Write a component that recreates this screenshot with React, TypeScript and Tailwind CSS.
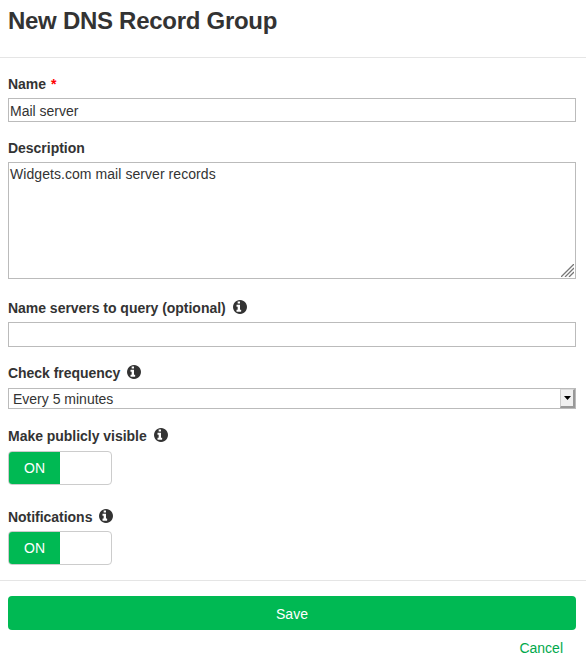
import { ReactNode, useState } from "react";

function InfoIcon() {
    return (
        <svg className="ml-[7px] h-[14px] w-[14px] shrink-0 -translate-y-px" viewBox="128 128 1536 1536" fill="currentColor" aria-hidden="true">
            <path d="M1024 1376v-160q0-14-9-23t-23-9h-96v-512q0-14-9-23t-23-9h-320q-14 0-23 9t-9 23v160q0 14 9 23t23 9h96v320h-96q-14 0-23 9t-9 23v160q0 14 9 23t23 9h448q14 0 23-9t9-23zM896 480v-160q0-14-9-23t-23-9h-192q-14 0-23 9t-9 23v160q0 14 9 23t23 9h192q14 0 23-9t9-23zM1664 896q0 209-103 385.5t-279.5 279.5-385.5 103-385.5-103-279.5-279.5-103-385.5 103-385.5 279.5-279.5 385.5-103 385.5 103 279.5 279.5 103 385.5z" />
        </svg>
    );
}

function Label({ text, children }: { text: string; children?: ReactNode }) {
    return (
        <div className="flex h-5 items-center font-bold leading-5 tracking-[-0.03px] whitespace-nowrap">
            <span>{text}</span>
            {children}
        </div>
    );
}

function Toggle() {
    const [on, setOn] = useState(true);

    return (
        <button
            type="button"
            onClick={() => setOn(!on)}
            className="flex h-[34px] w-[104px] overflow-hidden rounded-[4px] border border-[#ccc] bg-white"
        >
            <span className={on ? "flex h-full w-[51px] items-center justify-center bg-[#00b953] pt-px text-white" : "h-full w-[51px]"}>
                {on && "ON"}
            </span>
        </button>
    );
}

export default function App() {
    const [name, setName] = useState("Mail server");
    const [description, setDescription] = useState("Widgets.com mail server records");
    const [servers, setServers] = useState("");

    return (
        <form className="h-[664px] bg-white font-['Liberation_Sans',Arial,sans-serif] text-[14px] text-[#333]">
            <header className="h-[58px] border-b border-[#e5e5e5] pl-2">
                <h1 className="pt-1 text-[24px] font-bold leading-[34px] tracking-[-0.28px] whitespace-nowrap">New DNS Record Group</h1>
            </header>

            <section className="h-[523px] border-b border-[#e5e5e5] pt-4 pr-[10px] pl-2">
                <Label text="Name">
                    <span className="ml-[5px] text-[#f00]">*</span>
                </Label>
                <input
                    className="mt-1 block h-6 w-full border border-[#bbb] px-px pt-px outline-none"
                    value={name}
                    onChange={(e) => setName(e.target.value)}
                />

                <div className="mt-4">
                    <Label text="Description" />
                </div>
                <div className="relative mt-1 h-[117px]">
                    <textarea
                        className="block h-full w-full resize-none border border-[#bbb] px-px py-px leading-5 tracking-[0.06px] outline-none"
                        value={description}
                        onChange={(e) => setDescription(e.target.value)}
                    />
                    <svg className="absolute right-[2px] bottom-[2px]" width="13" height="13" viewBox="0 0 13 13" stroke="#777" strokeWidth="1.3">
                        <path d="M0 13L13 0M4 13L13 4M8 13L13 8" />
                    </svg>
                </div>

                <div className="mt-[19px]">
                    <Label text="Name servers to query (optional)">
                        <InfoIcon />
                    </Label>
                </div>
                <input
                    className="mt-1 block h-[25px] w-full border border-[#bbb] px-px outline-none"
                    value={servers}
                    onChange={(e) => setServers(e.target.value)}
                />

                <div className="mt-4">
                    <Label text="Check frequency">
                        <InfoIcon />
                    </Label>
                </div>
                <div className="mt-[5px] flex h-[21px] w-full items-center border border-[#bbb] pl-1">
                    <span className="flex-1 pt-0.5 leading-[19px]">Every 5 minutes</span>
                    <span className="flex h-full w-[15px] items-center justify-center border-t border-r-2 border-b-2 border-l border-t-[#ddd] border-r-[#999] border-b-[#999] border-l-[#ccc] bg-[#f0f0f0]">
                        <svg width="7" height="4" viewBox="0 0 7 4">
                            <path d="M0 0h7L3.5 4z" fill="#000" />
                        </svg>
                    </span>
                </div>

                <div className="mt-[17px]">
                    <Label text="Make publicly visible">
                        <InfoIcon />
                    </Label>
                </div>
                <div className="mt-[5px]">
                    <Toggle />
                </div>

                <div className="mt-[22px]">
                    <Label text="Notifications">
                        <InfoIcon />
                    </Label>
                </div>
                <div className="mt-1">
                    <Toggle />
                </div>
            </section>

            <footer className="pt-[15px] pr-[10px] pl-2">
                <button type="button" className="block h-[34px] w-full rounded-[4px] bg-[#00b953] pt-0.5 text-white">
                    Save
                </button>
                <div className="mt-2 flex justify-end pr-[13px]">
                    <a href="#" className="leading-5 text-[#00a94c]">
                        Cancel
                    </a>
                </div>
            </footer>
        </form>
    );
}
